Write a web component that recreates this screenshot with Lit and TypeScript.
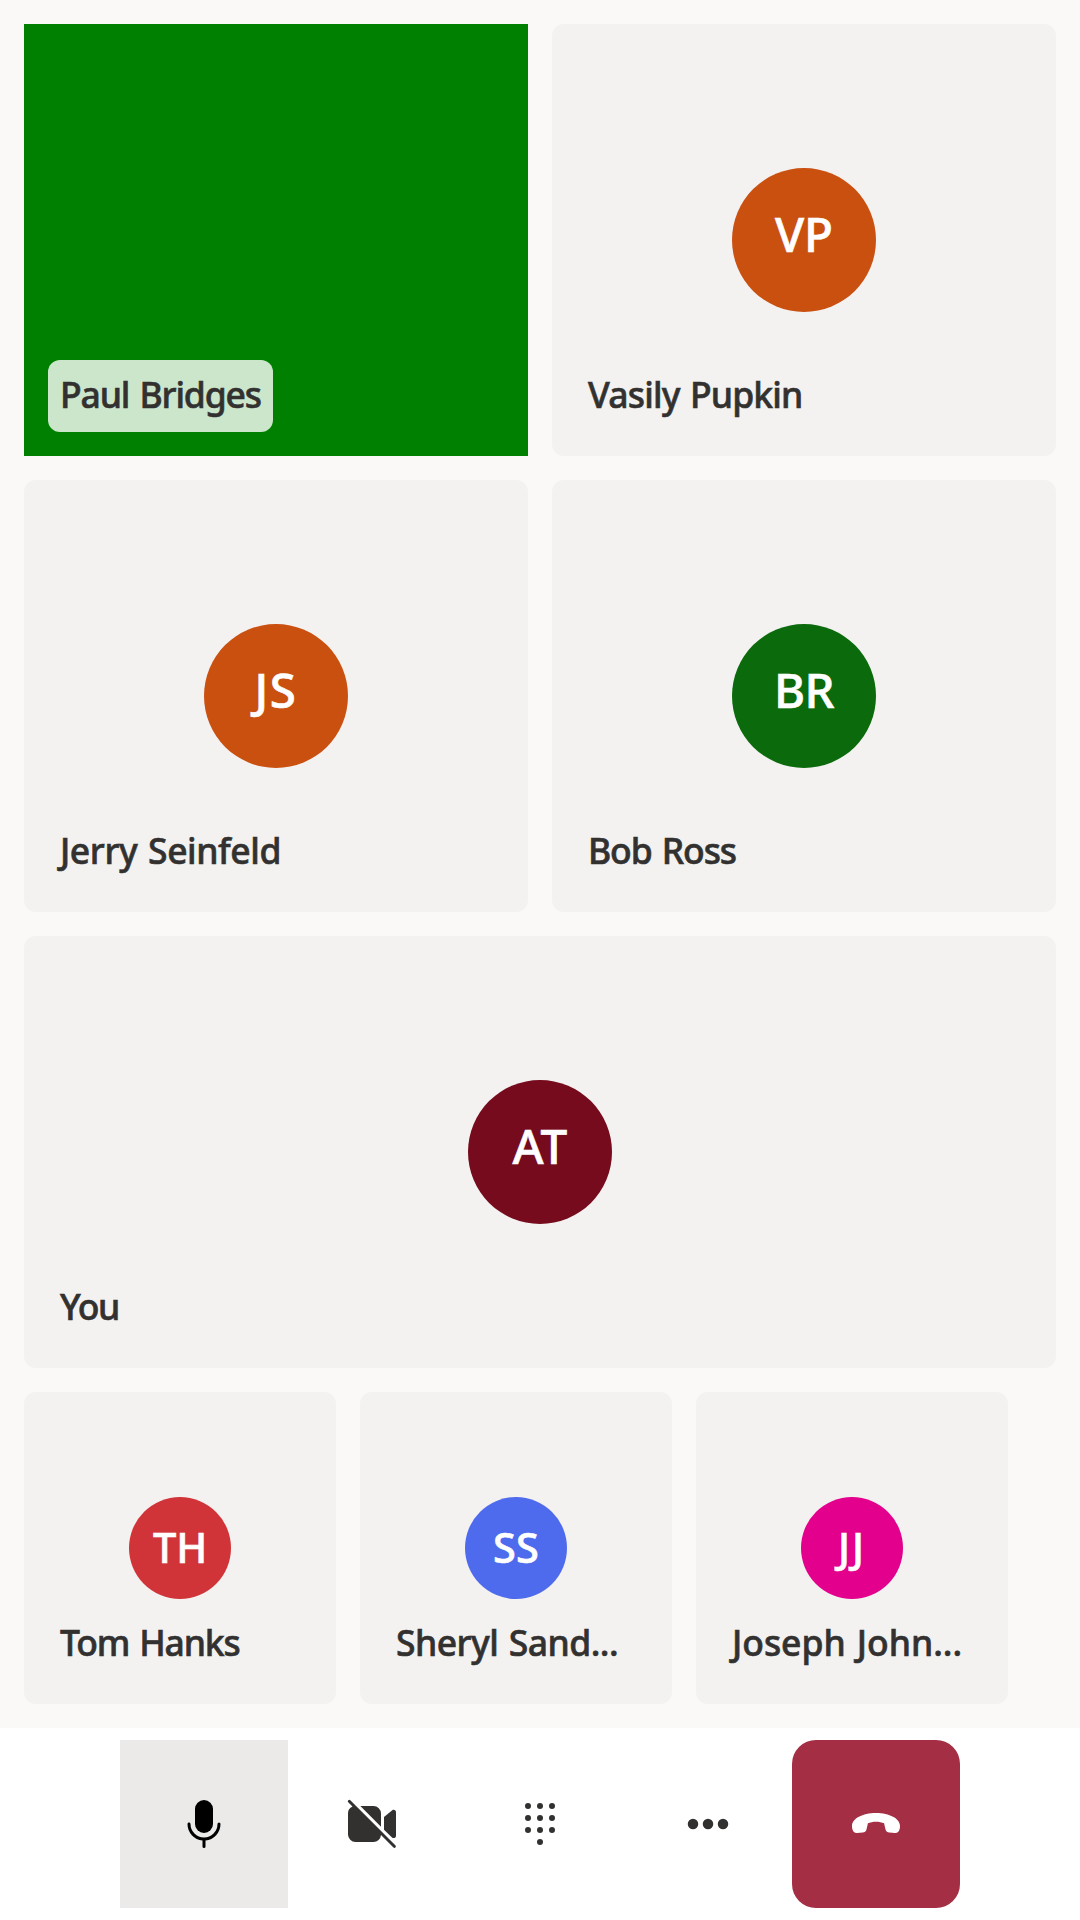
import { LitElement, html, css, svg } from "lit";
import { customElement, property } from "lit/decorators.js";
import { classMap } from "lit/directives/class-map.js";
import { styleMap } from "lit/directives/style-map.js";

/** One line of text, tracked so that it takes exactly `width` pixels. */
@customElement("fit-text")
export class FitText extends LitElement {
  @property() text = "";
  @property({ type: Number }) width = 0;

  static styles = css`
    :host {
      display: block;
      overflow: visible;
    }
    .line {
      display: inline-block;
      white-space: pre;
      word-spacing: 2px;
      -webkit-text-stroke: 0.6px currentColor;
    }
  `;

  updated() {
    const line = this.renderRoot.querySelector<HTMLElement>(".line")!;
    line.style.letterSpacing = "0px";
    const natural = line.getBoundingClientRect().width;
    line.style.letterSpacing = `${(this.width - natural) / this.text.length}px`;
  }

  render() {
    return html`<span class="line">${this.text}</span>`;
  }
}

interface Person {
  name: string;
  nameWidth: number;
  initials?: string;
  initialsWidth?: number;
  color?: string;
  video?: boolean;
  wide?: boolean;
}

const gallery: Person[] = [
  { name: "Paul Bridges", nameWidth: 201, video: true },
  { name: "Vasily Pupkin", nameWidth: 214.5, initials: "VP", initialsWidth: 58, color: "#ca5010" },
  { name: "Jerry Seinfeld", nameWidth: 221, initials: "JS", initialsWidth: 43, color: "#ca5010" },
  { name: "Bob Ross", nameWidth: 148, initials: "BR", initialsWidth: 60, color: "#0b6a0b" },
  { name: "You", nameWidth: 59, initials: "AT", initialsWidth: 55, color: "#750b1c", wide: true },
];

const overflow: Person[] = [
  { name: "Tom Hanks", nameWidth: 179.5, initials: "TH", initialsWidth: 54, color: "#d13438" },
  { name: "Sheryl Sand...", nameWidth: 222, initials: "SS", initialsWidth: 46, color: "#4f6bed" },
  { name: "Joseph John...", nameWidth: 230, initials: "JJ", initialsWidth: 28, color: "#e3008c" },
];

const icons = {
  mic: svg`
    <path d="M10 13a3 3 0 0 0 3-3V5a3 3 0 0 0-6 0v5a3 3 0 0 0 3 3z"/>
    <path d="M5 9.5c.28 0 .5.22.5.5a4.5 4.5 0 0 0 9 0 .5.5 0 0 1 1 0 5.5 5.5 0 0 1-5 5.48v2.02a.5.5 0 0 1-1 0v-2.02A5.5 5.5 0 0 1 4.5 10c0-.28.22-.5.5-.5z"/>`,
  videoOff: svg`
    <path d="M2.85 2.15a.5.5 0 1 0-.7.7L3.5 4.2A2.5 2.5 0 0 0 2 6.5v7A2.5 2.5 0 0 0 4.5 16h6a2.5 2.5 0 0 0 2.5-2.3l4.15 4.15a.5.5 0 0 0 .7-.7l-15-15z"/>
    <path d="M13 6.5v4.38L6.12 4h4.38A2.5 2.5 0 0 1 13 6.5z"/>
    <path d="M14 11.88l2.76 2.67c.5.38 1.24.03 1.24-.61V6.06c0-.64-.74-1-1.24-.61L14 7.7z"/>`,
  dialpad: svg`${[4, 8, 12].flatMap((y) =>
    [6, 10, 14].map((x) => svg`<circle cx=${x} cy=${y} r="1"/>`)
  )}<circle cx="10" cy="16" r="1"/>`,
  more: svg`${[5, 10, 15].map((x) => svg`<circle cx=${x} cy="10" r="1.75"/>`)}`,
  hangUp: svg`
    <path d="M10 6.33C14.5 6.33 18 8.2 18 10.6C18 11.3 17.9 11.8 17.7 12.2C17.45 12.85 17 13.06 16.3 13L14.4 12.85C13.8 12.8 13.4 12.5 13.2 11.9C13 11.2 12.85 10.5 12.7 9.75C12 9.4 11 9.22 10 9.22C9 9.22 8 9.4 7.3 9.75C7.15 10.5 7 11.2 6.8 11.9C6.6 12.5 6.2 12.8 5.6 12.85L3.7 13C3 13.06 2.55 12.85 2.3 12.2C2.1 11.8 2 11.3 2 10.6C2 8.2 5.5 6.33 10 6.33z"/>`,
};

@customElement("app-root")
export class AppRoot extends LitElement {
  static styles = css`
    :host {
      display: flex;
      flex-direction: column;
      box-sizing: border-box;
      width: 1080px;
      height: 1920px;
      background: #faf9f8;
      color: #323130;
      font-family: "Noto Sans", "Open Sans", sans-serif;
      font-weight: 500;
    }
    .stage {
      flex: 1;
      display: flex;
      flex-direction: column;
      gap: 24px;
      padding: 24px;
    }
    .gallery {
      display: grid;
      grid-template-columns: 1fr 1fr;
      grid-auto-rows: 432px;
      gap: 24px;
    }
    .strip {
      display: grid;
      grid-template-columns: repeat(3, 312px);
      grid-auto-rows: 312px;
      gap: 24px;
    }
    .tile {
      display: grid;
      grid-template: 100% / 100%;
      background: #f3f2f1;
      border-radius: 12px;
    }
    .tile > * {
      grid-area: 1 / 1;
    }
    .tile.video {
      background: #008000;
      border-radius: 0;
    }
    .tile.wide {
      grid-column: span 2;
    }
    .avatar {
      place-self: center;
      box-sizing: border-box;
      display: flex;
      align-items: center;
      justify-content: center;
      width: 144px;
      height: 144px;
      padding-bottom: 12px;
      border-radius: 50%;
      color: #fff;
      font-size: 47.5px;
      line-height: 64px;
    }
    .strip .avatar {
      width: 102px;
      height: 102px;
      padding-bottom: 2px;
      font-size: 41.5px;
      line-height: 56px;
    }
    .label {
      place-self: end start;
      box-sizing: border-box;
      height: 72px;
      margin: 0 0 24px 24px;
      padding: 10px 12px 0;
      border-radius: 12px;
      font-size: 35.5px;
      line-height: 48px;
    }
    .video .label {
      background: rgba(255, 255, 255, 0.8);
    }
    .controls {
      display: flex;
      justify-content: center;
      box-sizing: border-box;
      height: 192px;
      padding: 12px 0;
      background: #fff;
    }
    .control {
      display: flex;
      align-items: center;
      justify-content: center;
      width: 168px;
      height: 168px;
    }
    .control.active {
      background: #ebeae9;
      color: #000;
    }
    .control.end {
      background: #a42e43;
      color: #fff;
      border-radius: 24px;
    }
    .icon {
      width: 60px;
      height: 60px;
      fill: currentColor;
    }
  `;

  private tile(p: Person) {
    return html`
      <div class=${classMap({ tile: true, video: !!p.video, wide: !!p.wide })}>
        ${p.initials
          ? html`<div class="avatar" style=${styleMap({ background: p.color! })}>
              <fit-text .text=${p.initials} .width=${p.initialsWidth!}></fit-text>
            </div>`
          : null}
        <div class="label"><fit-text .text=${p.name} .width=${p.nameWidth}></fit-text></div>
      </div>
    `;
  }

  private control(icon: unknown, kind = "") {
    return html`
      <div class="control ${kind}">
        <svg class="icon" viewBox="0 0 20 20">${icon}</svg>
      </div>
    `;
  }

  render() {
    return html`
      <div class="stage">
        <div class="gallery">${gallery.map((p) => this.tile(p))}</div>
        <div class="strip">${overflow.map((p) => this.tile(p))}</div>
      </div>
      <div class="controls">
        ${this.control(icons.mic, "active")}
        ${this.control(icons.videoOff)}
        ${this.control(icons.dialpad)}
        ${this.control(icons.more)}
        ${this.control(icons.hangUp, "end")}
      </div>
    `;
  }
}
